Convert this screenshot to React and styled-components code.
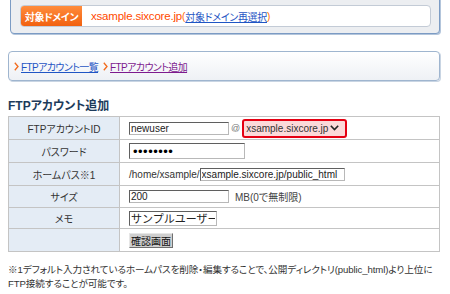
import React from 'react';
import styled, { createGlobalStyle } from 'styled-components';

const GlobalStyle = createGlobalStyle`
  html, body {
    margin: 0;
    padding: 0;
    background: #ffffff;
  }
  body {
    font-family: "Liberation Sans", "Noto Sans CJK JP", sans-serif;
    font-size: 10px;
    color: #333333;
    font-feature-settings: 'palt';
    overflow: hidden;
  }
`;

const Chevron = ({ color = '#f26b1d' }) => (
  <svg width="5" height="9" viewBox="0 0 5 9" style={{ display: 'block', flex: 'none' }}>
    <path d="M0.8 0.8 L4 4.5 L0.8 8.2" fill="none" stroke={color} strokeWidth="1.3" />
  </svg>
);

const DownArrow = () => (
  <svg width="9" height="6" viewBox="0 0 9 6" style={{ display: 'block', flex: 'none' }}>
    <path d="M0.8 0.8 L4.5 4.6 L8.2 0.8" fill="none" stroke="#222" strokeWidth="1.6" />
  </svg>
);

const App = () => {
  return (
    <Page>
      <GlobalStyle />

      <DomainPanel>
        <DomainBox>
          <DomainLabel>対象ドメイン</DomainLabel>
          <DomainName>xsample.sixcore.jp</DomainName>
          <Paren>(</Paren>
          <BlueLink href="#">対象ドメイン再選択</BlueLink>
          <Paren>)</Paren>
        </DomainBox>
      </DomainPanel>

      <Breadcrumb>
        <Chevron />
        <CrumbLink href="#">FTPアカウント一覧</CrumbLink>
        <Spacer />
        <Chevron />
        <CrumbLink href="#" $visited>FTPアカウント追加</CrumbLink>
      </Breadcrumb>

      <Heading>FTPアカウント追加</Heading>

      <FormTable>
        <tbody>
          <Row $h={23}>
            <Label>FTPアカウントID</Label>
            <Value>
              <Inline>
                <Input $w={100} defaultValue="newuser" />
                <At>@</At>
                <SelectWrap>
                  <Select defaultValue="xsample.sixcore.jp">
                    <option>xsample.sixcore.jp</option>
                  </Select>
                  <DownArrow />
                </SelectWrap>
              </Inline>
            </Value>
          </Row>
          <Row $h={23}>
            <Label>パスワード</Label>
            <Value>
              <Password type="password" defaultValue="newuser1" />
            </Value>
          </Row>
          <Row $h={23}>
            <Label>ホームパス※1</Label>
            <Value>
              <Inline>
                <span>/home/xsample/</span>
                <Input $w={145} defaultValue="xsample.sixcore.jp/public_html" />
              </Inline>
            </Value>
          </Row>
          <Row $h={22}>
            <Label>サイズ</Label>
            <Value>
              <Inline>
                <Input $w={100} defaultValue="200" />
                <Note>MB(0で無制限)</Note>
              </Inline>
            </Value>
          </Row>
          <Row $h={21}>
            <Label>メモ</Label>
            <Value>
              <Input $w={88} $jp defaultValue="サンプルユーザー" />
            </Value>
          </Row>
          <Row $h={23}>
            <Label />
            <Value>
              <ConfirmButton type="button">確認画面</ConfirmButton>
            </Value>
          </Row>
        </tbody>
      </FormTable>

      <Footnote>
        <Line>※1デフォルト入力されているホームパスを削除・編集することで、公開ディレクトリ(public_html)より上位に</Line>
        <Line>FTP接続することが可能です。</Line>
      </Footnote>
    </Page>
  );
};

export default App;

const Page = styled.div`
  width: 450px;
  height: 294px;
  padding: 0 10px 0 8px;
  box-sizing: border-box;
`;

const DomainPanel = styled.div`
  margin: -6px 0 0 2px;
  width: 430px;
  box-sizing: border-box;
  padding: 10px 8px 6px 9px;
  background: #eceef1;
  border: 1px solid #7b9bc4;
  border-radius: 4px;
  box-shadow: 1px 1px 0 #b3c5db;
`;

const DomainBox = styled.div`
  display: flex;
  align-items: center;
  height: 20px;
  background: #ffffff;
  border: 1px solid #c3cbd6;
  border-radius: 4px;
  overflow: hidden;
  white-space: nowrap;
`;

const DomainLabel = styled.div`
  width: 61px;
  height: 100%;
  display: flex;
  align-items: center;
  justify-content: center;
  background: linear-gradient(#ff8c3c, #f2610f);
  color: #ffffff;
  font-weight: bold;
  font-size: 10px;
  letter-spacing: -0.4px;
  margin-right: 9px;
`;

const DomainName = styled.span`
  color: #ff4a00;
  font-size: 11.5px;
  letter-spacing: -0.2px;
`;

const Paren = styled.span`
  color: #ff6a00;
  font-size: 10px;
`;

const BlueLink = styled.a`
  color: #1f55c4;
  text-decoration: underline;
  font-size: 10px;
  letter-spacing: -0.3px;
`;

const CrumbLink = styled.a`
  color: ${(p) => (p.$visited ? '#7d1a8e' : '#1f55c4')};
  text-decoration: underline;
  font-size: 10px;
  letter-spacing: -0.6px;
`;

const Breadcrumb = styled.div`
  margin-top: 17px;
  height: 30px;
  box-sizing: border-box;
  display: flex;
  align-items: center;
  gap: 2px;
  padding: 0 0 0 5px;
  background: linear-gradient(#ffffff, #eef1f5);
  border: 1px solid #9fb5cf;
  border-radius: 4px;
  box-shadow: 1px 1px 0 #c9d5e3;
  white-space: nowrap;
`;

const Spacer = styled.span`
  width: 1px;
`;

const Heading = styled.h2`
  margin: 18px 0 2px 0;
  font-size: 12px;
  line-height: 15px;
  font-weight: bold;
  color: #1d3b5b;
`;

const FormTable = styled.table`
  width: 432px;
  border-collapse: collapse;
  border: 1px solid #c4c4c4;
`;

const Row = styled.tr`
  height: ${(p) => p.$h}px;
`;

const Label = styled.td`
  width: 110px;
  padding: 0;
  background: #e4ecf5;
  border: 1px solid #c4c4c4;
  text-align: center;
  color: #333333;
  font-size: 10px;
`;

const Value = styled.td`
  padding: 0 0 0 9px;
  border: 1px solid #c4c4c4;
  background: #ffffff;
  font-size: 10px;
  color: #333333;
`;

const Inline = styled.div`
  display: flex;
  align-items: center;
  white-space: nowrap;
`;

const Input = styled.input`
  width: ${(p) => p.$w}px;
  height: ${(p) => (p.$jp ? 15 : 13)}px;
  box-sizing: border-box;
  padding: 0 1px;
  margin: 0;
  font-family: "Liberation Sans", "Noto Sans CJK JP", sans-serif;
  font-size: ${(p) => (p.$jp ? 11 : 10)}px;
  color: #222222;
  background: #ffffff;
  border: 1px solid;
  border-color: #5f5f5f #b8b8b8 #b8b8b8 #5f5f5f;
  display: block;
  outline: none;
`;

const Password = styled.input`
  width: 116px;
  height: 16px;
  box-sizing: border-box;
  padding: 0 3px;
  margin: 0;
  font-family: "Liberation Sans", sans-serif;
  font-size: 13px;
  letter-spacing: 0.5px;
  color: #000000;
  background: #ffffff;
  border: 1px solid;
  border-color: #5f5f5f #b8b8b8 #b8b8b8 #5f5f5f;
  display: block;
  outline: none;
`;

const At = styled.span`
  color: #777777;
  font-size: 9px;
  margin: 0 2px 0 2px;
`;

const SelectWrap = styled.div`
  width: 105px;
  height: 19px;
  box-sizing: border-box;
  display: flex;
  align-items: center;
  padding-right: 6px;
  border: 2px solid #e50012;
  border-radius: 3px;
  background: #fcd9d9;
`;

const Select = styled.select`
  appearance: none;
  -webkit-appearance: none;
  flex: 1;
  min-width: 0;
  border: none;
  background: transparent;
  padding: 0 0 0 2px;
  margin: 0;
  font-family: "Liberation Sans", sans-serif;
  font-size: 10px;
  color: #333333;
  outline: none;
`;

const Note = styled.span`
  margin-left: 6px;
  color: #444444;
`;

const ConfirmButton = styled.button`
  display: block;
  height: 15px;
  padding: 0 1px;
  margin: 0;
  font-family: "Noto Sans CJK JP", sans-serif;
  font-size: 10px;
  line-height: 13px;
  color: #111111;
  background: #cfcfcf;
  border: 1px solid;
  border-color: #e6e6e6 #6f6f6f #6f6f6f #e6e6e6;
  border-radius: 0;
`;

const Footnote = styled.div`
  margin-top: 11px;
  font-size: 9.6px;
  letter-spacing: -0.1px;
  line-height: 14px;
  color: #333333;
`;

const Line = styled.div`
  white-space: nowrap;
`;
